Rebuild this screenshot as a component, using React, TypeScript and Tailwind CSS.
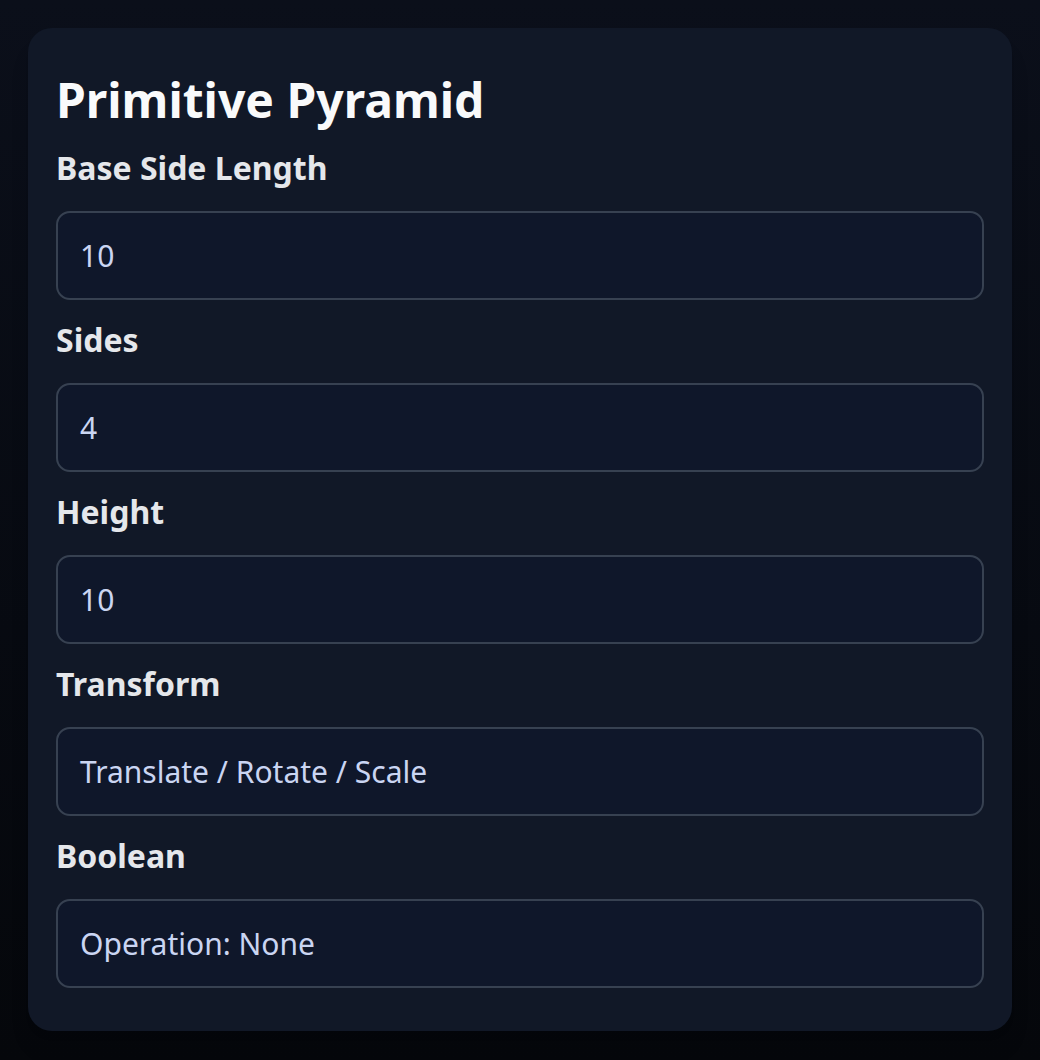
import React from 'react';

const fields = [
  { label: 'Base Side Length', value: '10' },
  { label: 'Sides', value: '4' },
  { label: 'Height', value: '10' },
  { label: 'Transform', value: 'Translate / Rotate / Scale' },
  { label: 'Boolean', value: 'Operation: None' },
];

export default function App() {
  return (
    <div
      className="min-h-[1060px] w-full bg-gradient-to-b from-[#0b0f1a] to-[#05070b] p-7"
      style={{ fontFamily: '"Noto Sans", "Open Sans", sans-serif' }}
    >
      <div className="rounded-3xl bg-[#111827] px-7 pt-[48px] pb-[43px] shadow-xl">
        <h1 className="text-[48px] font-bold leading-[48px] text-[#f9fafb]">Primitive Pyramid</h1>
        <div className="mt-[24px] flex flex-col gap-[20px]">
          {fields.map((f) => (
            <div key={f.label} className="flex flex-col gap-[23px]">
              <label className="text-[32px] font-bold leading-[40px] text-[#e5e7eb]">{f.label}</label>
              <div className="flex h-[89px] items-center rounded-[14px] border-2 border-[#374151] bg-[#0f172a] px-[22px] text-[30px] text-[#cad5f2]">
                {f.value}
              </div>
            </div>
          ))}
        </div>
      </div>
    </div>
  );
}
